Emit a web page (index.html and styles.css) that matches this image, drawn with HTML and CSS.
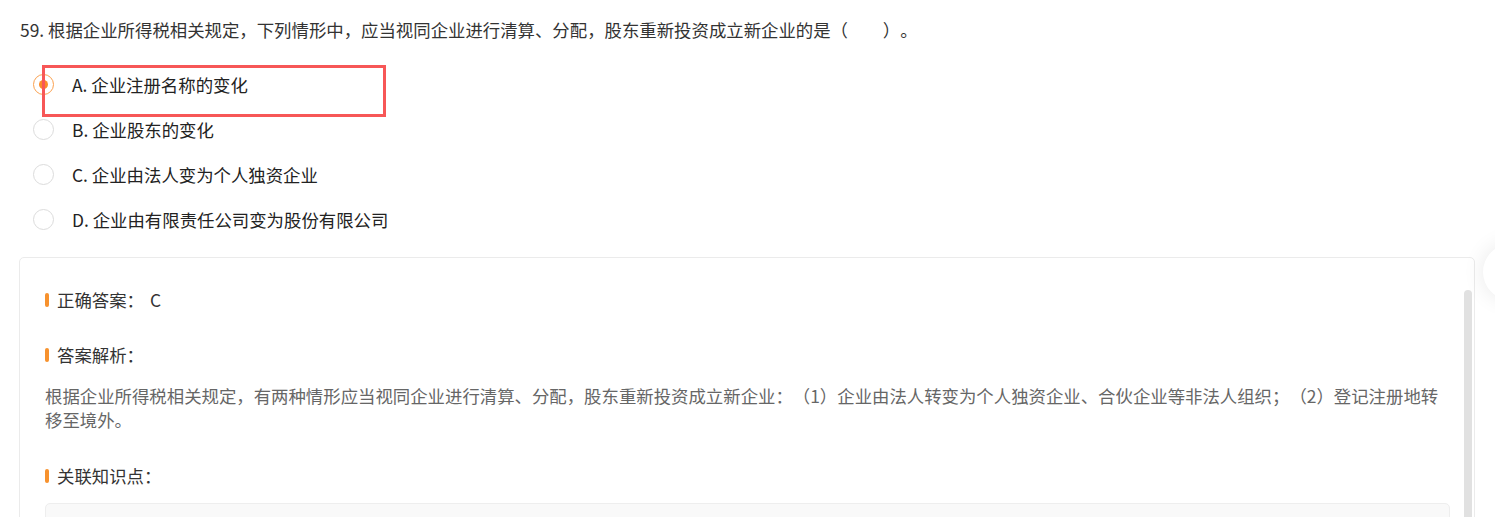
FILE: index.html
```html
<!DOCTYPE html>
<html lang="zh-CN">
<head>
<meta charset="utf-8">
<title>题目</title>
<link rel="stylesheet" href="styles.css">
</head>
<body>
<div class="page">
  <div class="question">59. 根据企业所得税相关规定，下列情形中，应当视同企业进行清算、分配，股东重新投资成立新企业的是（　　）。</div>
  <div class="options">
    <div class="option"><span class="radio checked"></span><span class="opt-text">A. 企业注册名称的变化</span></div>
    <div class="option"><span class="radio"></span><span class="opt-text">B. 企业股东的变化</span></div>
    <div class="option"><span class="radio"></span><span class="opt-text">C. 企业由法人变为个人独资企业</span></div>
    <div class="option"><span class="radio"></span><span class="opt-text">D. 企业由有限责任公司变为股份有限公司</span></div>
    <div class="highlight"></div>
  </div>
  <div class="card">
    <div class="section">
      <div class="label"><span class="bar"></span>正确答案：<span class="answer">C</span></div>
    </div>
    <div class="section s2">
      <div class="label"><span class="bar"></span>答案解析：</div>
      <p class="analysis">根据企业所得税相关规定，有两种情形应当视同企业进行清算、分配，股东重新投资成立新企业：（1）企业由法人转变为个人独资企业、合伙企业等非法人组织；（2）登记注册地转移至境外。</p>
    </div>
    <div class="section s3">
      <div class="label"><span class="bar"></span>关联知识点：</div>
      <div class="knowledge"></div>
    </div>
    <div class="scroll-thumb"></div>
  </div>
  <div class="float-btn"></div>
</div>
</body>
</html>
```

FILE: styles.css
```css
html, body {
  margin: 0;
  padding: 0;
  background: #fff;
  overflow: hidden;
}
body {
  font-family: "Noto Sans CJK SC", "Microsoft YaHei", sans-serif;
  font-size: 17.4px;
  color: #333;
  text-spacing-trim: space-all;
}
.page {
  position: relative;
  padding: 18px 20px 0 19px;
  height: 517px;
  box-sizing: border-box;
}
.question {
  line-height: 24px;
  padding-left: 1px;
  color: #333;
}
.options {
  position: relative;
  margin-top: 20px;
  display: flex;
  flex-direction: column;
}
.option {
  height: 45px;
  display: flex;
  align-items: center;
  padding-left: 14px;
}
.radio {
  width: 21px;
  height: 21px;
  border: 1px solid #dcdcdc;
  border-radius: 50%;
  box-sizing: border-box;
  display: flex;
  align-items: center;
  justify-content: center;
  flex-shrink: 0;
}
.radio.checked {
  border-color: #fba04e;
}
.radio.checked::after {
  content: "";
  width: 9px;
  height: 9px;
  border-radius: 50%;
  background: #fb8b2a;
}
.opt-text {
  margin-left: 18px;
  line-height: 24px;
  color: #222;
}
.highlight {
  position: absolute;
  left: 23px;
  top: 3px;
  width: 344px;
  height: 52px;
  border: 3px solid #f75757;
  box-sizing: border-box;
}
.card {
  position: relative;
  margin-top: 15px;
  border: 1px solid #ebebeb;
  border-radius: 5px;
  padding: 30px 24px 0 25px;
  height: 400px;
  box-sizing: border-box;
}
.label {
  display: flex;
  align-items: center;
  line-height: 24px;
  color: #333;
}
.answer {
  margin-left: 6px;
}
.bar {
  width: 4px;
  height: 14px;
  border-radius: 2px;
  background: #f7922e;
  margin-right: 8px;
}
.s2 {
  margin-top: 31px;
}
.analysis {
  margin: 17px 0 0;
  line-height: 24px;
  color: #666;
}
.s3 {
  margin-top: 32px;
}
.knowledge {
  margin-top: 15px;
  height: 60px;
  background: #f9f9f9;
  border: 1px solid #eeeeee;
  border-radius: 5px;
}
.scroll-thumb {
  position: absolute;
  right: 2px;
  top: 32px;
  width: 8px;
  height: 400px;
  border-radius: 4px;
  background: #e1e1e1;
}
.float-btn {
  position: absolute;
  left: 1483px;
  top: 244px;
  width: 56px;
  height: 56px;
  border-radius: 50%;
  background: #fff;
  box-shadow: 0 0 22px rgba(0, 0, 0, 0.09);
}
```
